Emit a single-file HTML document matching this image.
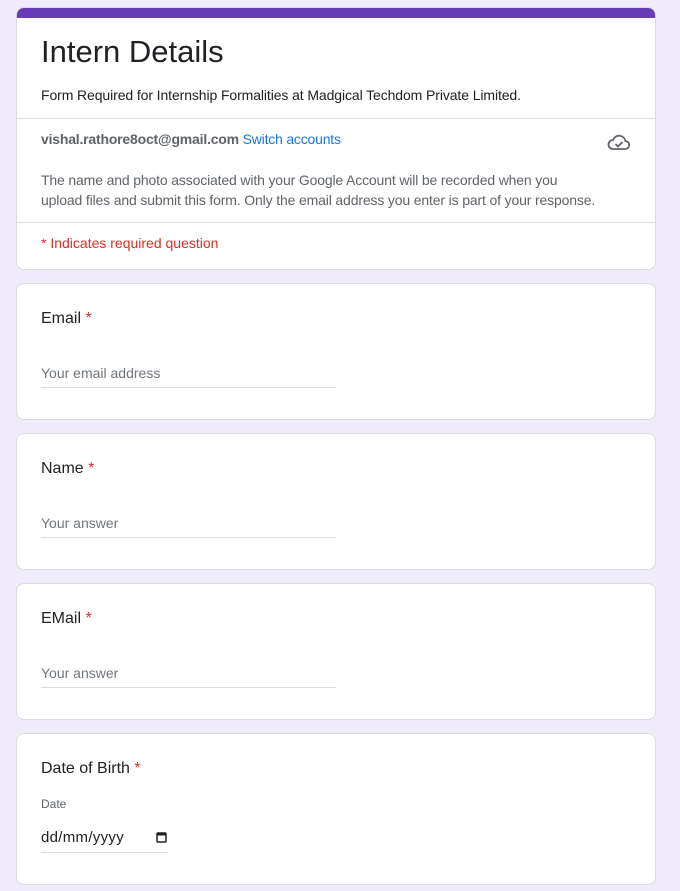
<!DOCTYPE html>
<html><head><meta charset="utf-8"><style>
*{box-sizing:border-box;margin:0;padding:0}
body{width:680px;height:891px;background:#f0ebf8;font-family:"Liberation Sans",Arial,sans-serif;position:relative;overflow:hidden;color:#202124}
.card{position:absolute;left:16px;width:640px;background:#fff;border:1px solid #dadce0;border-radius:8px}
.abs{position:absolute;white-space:nowrap}
.q{left:24px;top:26px;font-size:16px;color:#202124}
.star{color:#d93025}
.ph{left:24px;font-size:14px;color:#70757a}
.line{position:absolute;left:24px;height:1px;background:#dadce0}
</style></head><body>
<div class="card" style="top:7px;height:263px;overflow:hidden">
  <div style="position:absolute;left:0;top:0;width:100%;height:10px;background:#673ab7"></div>
  <div class="abs" style="left:24px;top:26px;font-size:31px;color:#202124">Intern Details</div>
  <div class="abs" style="left:24px;top:79px;font-size:14px;color:#202124;letter-spacing:-0.1px">Form Required for Internship Formalities at Madgical Techdom Private Limited.</div>
  <div style="position:absolute;left:0;top:110px;width:100%;height:1px;background:#dadce0"></div>
  <div class="abs" style="left:24px;top:123px;font-size:14px;letter-spacing:-0.2px"><b style="color:#5f6368">vishal.rathore8oct@gmail.com</b> <span style="color:#1a73e8">Switch accounts</span></div>
  <svg class="abs" style="left:590px;top:123px" width="24" height="22" viewBox="0 0 24 22"><path d="M6 18h12a4 4 0 0 0 .5-8A6.5 6.5 0 0 0 6 9a4.5 4.5 0 0 0 0 9z" fill="none" stroke="#5f6368" stroke-width="1.8"/><path d="M8.5 13l2.5 2.5 4.5-4.5" fill="none" stroke="#5f6368" stroke-width="1.8"/></svg>
  <div class="abs" style="left:24px;top:162px;font-size:14px;line-height:20px;color:#5f6368;white-space:normal;width:555px;letter-spacing:-0.15px">The name and photo associated with your Google Account will be recorded when you upload files and submit this form. Only the email address you enter is part of your response.</div>
  <div style="position:absolute;left:0;top:214px;width:100%;height:1px;background:#dadce0"></div>
  <div class="abs" style="left:24px;top:227px;font-size:14px;color:#d93025">* Indicates required question</div>
</div>

<div class="card" style="top:283px;height:137px">
  <div class="abs q">Email <span class="star">*</span></div>
  <div class="abs ph" style="top:81px">Your email address</div>
  <div class="line" style="top:103px;width:295px"></div>
</div>
<div class="card" style="top:433px;height:137px">
  <div class="abs q">Name <span class="star">*</span></div>
  <div class="abs ph" style="top:81px">Your answer</div>
  <div class="line" style="top:103px;width:295px"></div>
</div>
<div class="card" style="top:583px;height:137px">
  <div class="abs q">EMail <span class="star">*</span></div>
  <div class="abs ph" style="top:81px">Your answer</div>
  <div class="line" style="top:103px;width:295px"></div>
</div>
<div class="card" style="top:733px;height:152px">
  <div class="abs q">Date of Birth <span class="star">*</span></div>
  <div class="abs" style="left:24px;top:63px;font-size:12px;color:#5f6368">Date</div>
  <div class="abs" style="left:24px;top:95px;font-size:15px;color:#202124;letter-spacing:0.3px">dd/mm/yyyy</div>
  <svg class="abs" style="left:139px;top:97px" width="11" height="12" viewBox="0 0 11 12"><rect x="1" y="2" width="9" height="9" rx="1" fill="none" stroke="#202124" stroke-width="1.5"/><rect x="1" y="2" width="9" height="2.5" fill="#202124"/></svg>
  <div class="line" style="top:118px;width:127px"></div>
</div>
</body></html>
